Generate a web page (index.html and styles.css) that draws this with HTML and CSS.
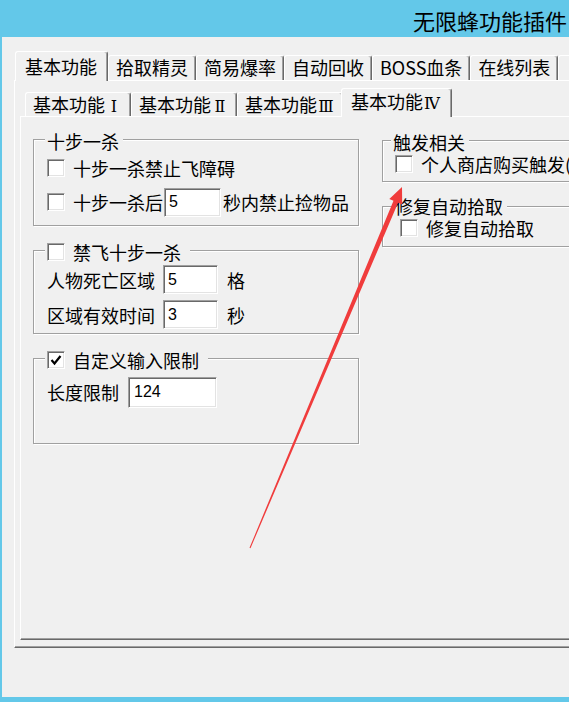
FILE: index.html
```html
<!DOCTYPE html>
<html lang="zh-CN">
<head>
    <meta charset="UTF-8">
    <title>无限蜂功能插件</title>
    <link rel="stylesheet" href="styles.css">
</head>
<body>

    <div class="titlebar"><span>无限蜂功能插件</span></div>

    <div class="window">
        <div class="tabs">
            <div class="tab active">基本功能</div>
            <div class="tab">拾取精灵</div>
            <div class="tab">简易爆率</div>
            <div class="tab">自动回收</div>
            <div class="tab">BOSS血条</div>
            <div class="tab">在线列表</div>
            <div class="tab tab-stub"></div>
        </div>

        <div class="panel outer-panel">
            <div class="tabs sub">
                <div class="tab">基本功能<span class="num">Ⅰ</span></div>
                <div class="tab">基本功能<span class="num">Ⅱ</span></div>
                <div class="tab">基本功能<span class="num">Ⅲ</span></div>
                <div class="tab active">基本功能<span class="num">Ⅳ</span></div>
            </div>

            <div class="panel inner-panel">
                <div class="columns">
                    <div class="col col-left">
                        <div class="group g-kill">
                            <div class="group-title">十步一杀</div>
                            <div class="row"><span class="check"></span>十步一杀禁止飞障碍</div>
                            <div class="row"><span class="check"></span>十步一杀后<input class="field f-sec" type="text" value="5">秒内禁止捡物品</div>
                        </div>

                        <div class="group g-nofly">
                            <div class="group-title has-check"><span class="check"></span>禁飞十步一杀</div>
                            <div class="row"><span class="label">人物死亡区域</span><input class="field f-short" type="text" value="5">格</div>
                            <div class="row"><span class="label">区域有效时间</span><input class="field f-short" type="text" value="3">秒</div>
                        </div>

                        <div class="group g-limit">
                            <div class="group-title has-check">
                                <span class="check">
                                    <svg width="12" height="12" viewBox="0 0 12 12"><polyline points="1.5,6 4.5,9.5 10.5,2" fill="none" stroke="#000" stroke-width="2.2"/></svg>
                                </span>自定义输入限制
                            </div>
                            <div class="row"><span class="label">长度限制</span><input class="field f-long" type="text" value="124"></div>
                        </div>
                    </div>

                    <div class="col col-right">
                        <div class="group g-trigger">
                            <div class="group-title">触发相关</div>
                            <div class="row"><span class="check"></span>个人商店购买触发(</div>
                        </div>

                        <div class="group g-repair">
                            <div class="group-title">修复自动拾取</div>
                            <div class="row"><span class="check"></span>修复自动拾取</div>
                        </div>
                    </div>
                </div>
            </div>
        </div>
    </div>

    <!-- red arrow drawn over the screenshot -->
    <svg class="arrow" width="569" height="702" viewBox="0 0 569 702">
        <polygon points="402,187 402.2,204.4 398.1,202.7 250.5,548.2 249.5,547.8 393.5,200.7 389.3,199" fill="#f03c3c"/>
    </svg>

</body>
</html>
```

FILE: styles.css
```css
html, body {
    margin: 0;
}

body {
    position: relative;
    width: 569px;
    height: 702px;
    overflow: hidden;
    background: #63c8e9;
    font-family: "Noto Sans CJK SC", sans-serif;
    font-size: 18px;
    color: #000;
}

.titlebar {
    height: 37px;
    box-sizing: border-box;
    display: flex;
    justify-content: flex-end;
    align-items: center;
    padding: 2px 2px 0 0;
    font-size: 22px;
}

.window {
    width: 700px;
    height: 660px;
    box-sizing: border-box;
    margin-left: 2px;
    padding: 14px 0 0 12px;
    background: #f0f0f0;
}

/* tab strips */
.tabs {
    display: flex;
    align-items: flex-end;
    padding-left: 3px;
}

.tab {
    flex: none;
    height: 25px;
    box-sizing: border-box;
    padding: 0 7px;
    line-height: 23px;
    white-space: nowrap;
    border-top: 1px solid #fff;
    border-left: 1px solid #fff;
    border-right: 1px solid #696969;
    border-radius: 3px 3px 0 0;
    box-shadow: inset -1px 0 #a0a0a0;
}

.tab.active {
    position: relative;
    z-index: 1;
    height: 30px;
    margin: 0 0 -1px -2px;
    padding: 3px 10px 0 9px;
    background: #f0f0f0;
}

.tab-stub {
    width: 60px;
}

.tabs.sub {
    padding-left: 5px;
}

.tabs.sub .tab {
    height: 24px;
    line-height: 22px;
}

.tabs.sub .tab.active {
    height: 29px;
    padding-top: 1px;
}

.num {
    display: inline-block;
    width: 18px;
    text-align: center;
    font-family: "DejaVu Serif", "Noto Sans CJK SC", serif;
    font-size: 16px;
}

/* tab pages */
.panel {
    box-sizing: border-box;
    border-top: 1px solid #fff;
    border-left: 1px solid #fff;
    border-right: 1px solid #696969;
    border-bottom: 1px solid #696969;
    box-shadow: inset -1px -1px #a0a0a0;
}

.outer-panel {
    height: 568px;
    padding: 7px 0 0 5px;
}

.inner-panel {
    height: 524px;
    padding-left: 12px;
}

.columns {
    display: flex;
    align-items: flex-start;
    gap: 23px;
}

.col {
    flex: none;
}

.col-left {
    width: 326px;
}

.col-right {
    width: 260px;
}

/* group boxes */
.group {
    margin-top: 24px;
    padding: 0 6px 6px 13px;
    border: 1px solid #a0a0a0;
    box-shadow: inset 1px 1px #fff, 1px 1px #fff;
}

.col-left .group:first-child {
    margin-top: 22px;
}

.col-right .group:first-child {
    margin-top: 23px;
}

.group-title {
    display: flex;
    align-items: center;
    width: max-content;
    height: 20px;
    margin: -9px 0 0 -2px;
    padding: 0 4px 0 2px;
    line-height: 20px;
    background: #f0f0f0;
}

.group-title.has-check {
    padding-right: 9px;
}

.row {
    display: flex;
    align-items: center;
    height: 34px;
    line-height: 20px;
    white-space: nowrap;
}

.g-nofly {
    padding-bottom: 1px;
}

.g-nofly .row {
    height: 35px;
}

.g-limit {
    padding-bottom: 33px;
}

.g-limit .row {
    height: 36px;
    margin-top: 4px;
}

.g-trigger {
    padding: 0 0 5px 12px;
}

.g-trigger .group-title {
    margin-left: -4px;
}

.g-trigger .row,
.g-repair .row {
    height: 24px;
}

.g-repair {
    padding: 0 0 6px 17px;
}

.g-repair .group-title {
    margin: -11px 0 0 -7px;
}

/* controls */
.check {
    flex: none;
    display: flex;
    align-items: center;
    justify-content: center;
    width: 18px;
    height: 18px;
    box-sizing: border-box;
    margin-right: 8px;
    background: #fff;
    border: 1px solid;
    border-color: #a0a0a0 #fff #fff #a0a0a0;
    box-shadow: inset 1px 1px #696969, inset -1px -1px #e3e3e3;
}

.field {
    flex: none;
    height: 29px;
    box-sizing: border-box;
    padding: 0 0 0 4px;
    background: #fff;
    border: 1px solid;
    border-color: #a0a0a0 #fff #fff #a0a0a0;
    box-shadow: inset 1px 1px #696969, inset -1px -1px #e3e3e3;
    font-family: "Liberation Sans", sans-serif;
    font-size: 16px;
    color: #000;
    outline: none;
}

.f-sec {
    width: 57px;
    margin: 0 2px 0 1px;
}

.f-short {
    width: 55px;
    height: 29px;
    margin: 0 9px 0 8px;
}

.f-long {
    width: 89px;
    height: 31px;
    margin-left: 9px;
    padding-left: 5px;
}

.arrow {
    position: absolute;
    left: 0;
    top: 0;
    pointer-events: none;
}
```
